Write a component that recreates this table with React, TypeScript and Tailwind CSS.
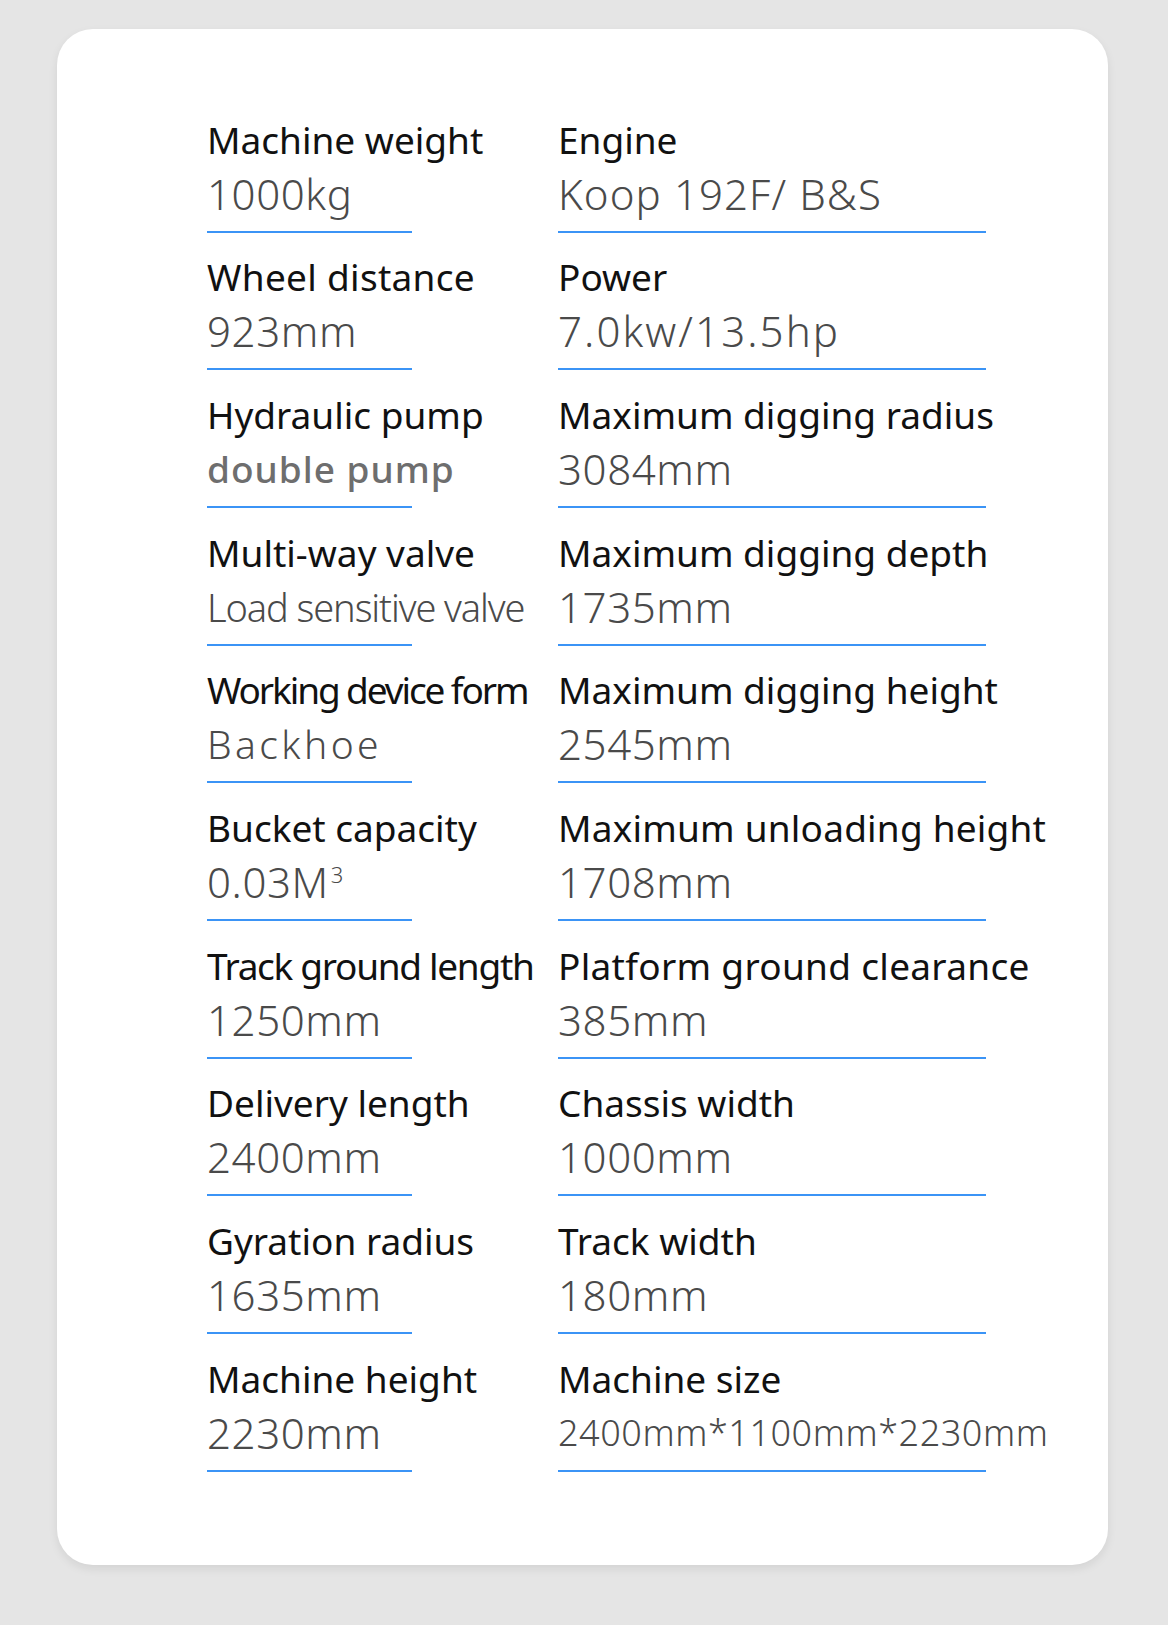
import React from "react";

type Item = {
  label: string;
  value: React.ReactNode;
  labelClass?: string;
  valueClass?: string;
};

const left: Item[] = [
  { label: "Machine weight", value: "1000kg" },
  { label: "Wheel distance", value: "923mm", labelClass: "tracking-[0.3px]" },
  {
    label: "Hydraulic pump",
    value: "double pump",
    valueClass: "text-[37px] font-medium tracking-[1px] text-[#6e6e6e]",
  },
  {
    label: "Multi-way valve",
    value: "Load sensitive valve",
    valueClass: "text-[38px] tracking-[-1.1px]",
  },
  {
    label: "Working device form",
    value: "Backhoe",
    labelClass: "tracking-[-2.1px]",
    valueClass: "text-[39px] tracking-[3.4px]",
  },
  {
    label: "Bucket capacity",
    value: (
      <>
        0.03M
        <sup className="relative -top-[15px] ml-[2px] align-baseline text-[22px]">3</sup>
      </>
    ),
  },
  { label: "Track ground length", value: "1250mm", labelClass: "tracking-[-1.3px]" },
  { label: "Delivery length", value: "2400mm" },
  { label: "Gyration radius", value: "1635mm" },
  { label: "Machine height", value: "2230mm" },
];

const right: Item[] = [
  { label: "Engine", value: "Koop 192F/ B&S", valueClass: "text-[42px] tracking-[1.1px]" },
  { label: "Power", value: "7.0kw/13.5hp", valueClass: "text-[42px] tracking-[2.1px]" },
  { label: "Maximum digging radius", value: "3084mm" },
  { label: "Maximum digging depth", value: "1735mm" },
  { label: "Maximum digging height", value: "2545mm" },
  { label: "Maximum unloading height", value: "1708mm", labelClass: "tracking-[0.2px]" },
  { label: "Platform ground clearance", value: "385mm", labelClass: "tracking-[0.3px]" },
  { label: "Chassis width", value: "1000mm" },
  { label: "Track width", value: "180mm" },
  { label: "Machine size", value: "2400mm*1100mm*2230mm", valueClass: "text-[36px] tracking-[0.55px]" },
];

function Cell({ item, lineW }: { item: Item; lineW: string }) {
  return (
    <div className="flex h-[137.7px] flex-col">
      <div
        className={
          "h-[48px] whitespace-nowrap text-[37px] leading-[48px] text-[#111111] " +
          (item.labelClass ?? "")
        }
      >
        {item.label}
      </div>
      <div
        className={
          "h-[60px] whitespace-nowrap font-[350] leading-[60px] text-[#4a4a4a] " +
          (item.valueClass ?? "text-[42px] tracking-[0.6px]")
        }
      >
        {item.value}
      </div>
      <div className={"mt-[7px] h-[2px] bg-[#3b94f6] " + lineW} />
    </div>
  );
}

export default function App() {
  return (
    <div
      className="min-h-[1625px] w-full bg-[#e5e5e5] pt-[29px]"
      style={{ fontFamily: '"Noto Sans", "Open Sans", sans-serif' }}
    >
      <div className="ml-[57px] h-[1536px] w-[1051px] rounded-[36px] bg-white pl-[150px] pt-[86.6px] shadow-[0_4px_10px_rgba(0,0,0,0.08)]">
        <div className="grid grid-cols-[351px_1fr]">
          <div className="flex flex-col">
            {left.map((it) => (
              <Cell key={it.label} item={it} lineW="w-[205px]" />
            ))}
          </div>
          <div className="flex flex-col">
            {right.map((it) => (
              <Cell key={it.label} item={it} lineW="w-[428px]" />
            ))}
          </div>
        </div>
      </div>
    </div>
  );
}
